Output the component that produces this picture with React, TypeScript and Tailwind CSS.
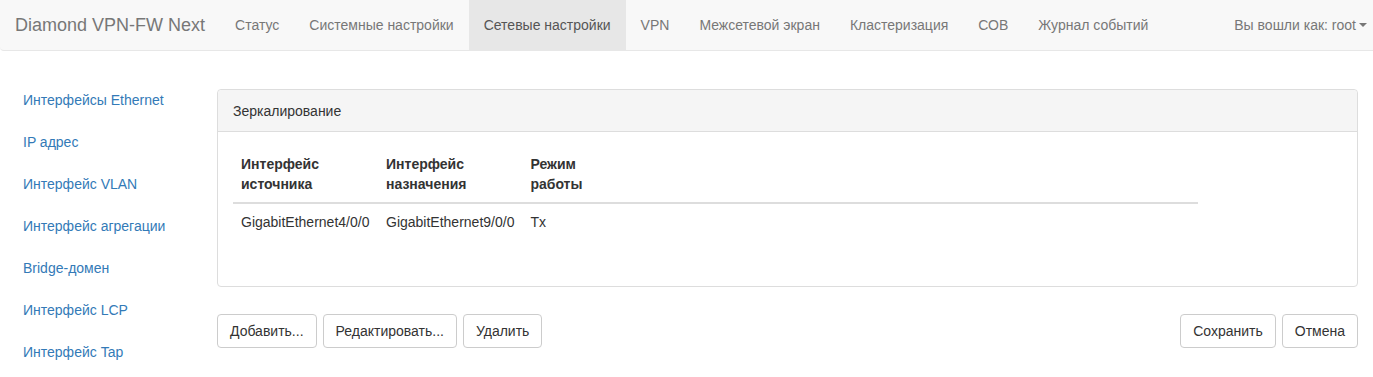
import { useState } from 'react';

const navItems = [
    'Статус',
    'Системные настройки',
    'Сетевые настройки',
    'VPN',
    'Межсетевой экран',
    'Кластеризация',
    'СОВ',
    'Журнал событий',
];

const sideItems = [
    'Интерфейсы Ethernet',
    'IP адрес',
    'Интерфейс VLAN',
    'Интерфейс агрегации',
    'Bridge-домен',
    'Интерфейс LCP',
    'Интерфейс Tap',
];

interface MirrorRow {
    source: string;
    target: string;
    mode: string;
}

const rows: MirrorRow[] = [
    { source: 'GigabitEthernet4/0/0', target: 'GigabitEthernet9/0/0', mode: 'Tx' },
];

function Btn({ children }: { children: React.ReactNode }) {
    return (
        <button className="h-[34px] px-3 border border-[#ccc] rounded bg-white text-[14px] leading-5 text-[#333] hover:bg-[#e6e6e6]">
            {children}
        </button>
    );
}

export default function App() {
    const [active] = useState('Сетевые настройки');

    return (
        <div className="min-h-screen bg-white text-[#333] text-[14px] leading-5 font-['Liberation_Sans',Arial,sans-serif]">
            {/* top navbar */}
            <nav className="h-[51px] flex items-stretch bg-[#f8f8f8] border-b border-[#e7e7e7] rounded-bl">
                <a className="px-[15px] flex items-center text-[18px] text-[#777]">Diamond VPN-FW Next</a>
                <ul className="flex">
                    {navItems.map(item => (
                        <li key={item}>
                            <a
                                className={
                                    'h-[50px] px-[15px] flex items-center ' +
                                    (item === active ? 'bg-[#e7e7e7] text-[#555]' : 'text-[#777]')
                                }
                            >
                                {item}
                            </a>
                        </li>
                    ))}
                </ul>
                <a className="ml-auto pr-[6px] flex items-center text-[#777]">
                    Вы вошли как: root
                    <span className="ml-[3px] w-0 h-0 border-x-4 border-x-transparent border-t-4 border-t-[#777]" />
                </a>
            </nav>

            <div className="flex">
                {/* left menu */}
                <ul className="w-[202px] shrink-0 pl-2 pt-[29px] flex flex-col gap-[2px]">
                    {sideItems.map(item => (
                        <li key={item}>
                            <a className="block px-[15px] py-[10px] text-[#337ab7] whitespace-nowrap">{item}</a>
                        </li>
                    ))}
                </ul>

                <div className="flex-1 pl-[15px] pr-[15px] pt-[38px]">
                    <div className="border border-[#ddd] rounded bg-white">
                        <div className="h-[42px] px-[15px] flex items-center bg-[#f5f5f5] border-b border-[#ddd] rounded-t">
                            Зеркалирование
                        </div>
                        <div className="px-[15px] pt-[14px] pb-[46px]">
                            <table className="w-[965px] border-collapse">
                                <thead>
                                    <tr className="border-b-2 border-[#ddd] text-left align-bottom">
                                        <th className="w-[145px] p-2 font-bold">Интерфейс источника</th>
                                        <th className="w-[144px] p-2 font-bold">Интерфейс назначения</th>
                                        <th className="w-[70px] p-2 font-bold">Режим работы</th>
                                        <th className="p-2"></th>
                                    </tr>
                                </thead>
                                <tbody>
                                    {rows.map((r, i) => (
                                        <tr key={i}>
                                            <td className="p-2 whitespace-nowrap">{r.source}</td>
                                            <td className="p-2 whitespace-nowrap">{r.target}</td>
                                            <td className="p-2">{r.mode}</td>
                                            <td className="p-2"></td>
                                        </tr>
                                    ))}
                                </tbody>
                            </table>
                        </div>
                    </div>

                    <div className="mt-[27px] flex">
                        <div className="flex gap-[6px]">
                            <Btn>Добавить...</Btn>
                            <Btn>Редактировать...</Btn>
                            <Btn>Удалить</Btn>
                        </div>
                        <div className="ml-auto flex gap-[6px]">
                            <Btn>Сохранить</Btn>
                            <Btn>Отмена</Btn>
                        </div>
                    </div>
                </div>
            </div>
        </div>
    );
}
